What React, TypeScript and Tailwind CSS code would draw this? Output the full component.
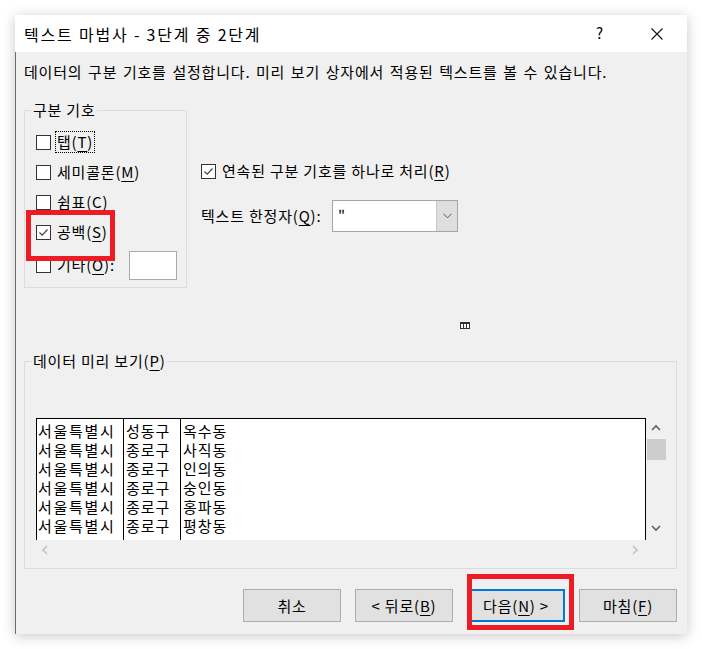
import React from "react";

const font = "font-['Noto_Sans_CJK_KR','Noto_Sans',sans-serif]";

function Mn({ children }: { children: string }) {
  return <span className="underline underline-offset-[3px] decoration-1">{children}</span>;
}

function CheckBox({ checked }: { checked?: boolean }) {
  return (
    <span className="flex h-[15px] w-[15px] shrink-0 items-center justify-center border border-[#333333] bg-white">
      {checked && (
        <svg width="13" height="13" viewBox="0 0 13 13">
          <polyline points="2.5,6.5 5.2,9.2 10.5,3.5" fill="none" stroke="#444444" strokeWidth="1.2" />
        </svg>
      )}
    </span>
  );
}

function Chevron({ dir, color }: { dir: "up" | "down" | "left" | "right"; color: string }) {
  const pts = {
    up: "1,6 5,2 9,6",
    down: "1,2 5,6 9,2",
    left: "6,1 2,5 6,9",
    right: "2,1 6,5 2,9",
  }[dir];
  const vertical = dir === "up" || dir === "down";
  return (
    <svg width={vertical ? 10 : 8} height={vertical ? 8 : 10} viewBox={vertical ? "0 0 10 8" : "0 0 8 10"}>
      <polyline points={pts} fill="none" stroke={color} strokeWidth="1.6" />
    </svg>
  );
}

const rows = [
  ["서울특별시", "성동구", "옥수동"],
  ["서울특별시", "종로구", "사직동"],
  ["서울특별시", "종로구", "인의동"],
  ["서울특별시", "종로구", "숭인동"],
  ["서울특별시", "종로구", "홍파동"],
  ["서울특별시", "종로구", "평창동"],
];

export default function App() {
  return (
    <div className={`relative h-[649px] w-[702px] bg-white pl-[15px] pt-[15px] text-[15px] tracking-[0.8px] text-black ${font}`}>
      <div className="w-[672px] shadow-[0_2px_12px_rgba(0,0,0,0.22)]">
        {/* title bar */}
        <div className="flex h-[37px] items-center bg-white pl-[9px]">
          <span className="text-[16px] leading-[20px] tracking-[1.8px]">텍스트 마법사 - 3단계 중 2단계</span>
          <div className="ml-auto flex pr-[7px]">
            <span className="mr-[11px] flex h-[37px] w-[46px] items-center justify-center">?</span>
            <span className="flex h-[37px] w-[46px] items-center justify-center">
              <svg width="12" height="12" viewBox="0 0 12 12">
                <path d="M0.5 0.5L11.5 11.5M11.5 0.5L0.5 11.5" stroke="#111111" strokeWidth="1.1" />
              </svg>
            </span>
          </div>
        </div>

        {/* body */}
        <div className="flex h-[582px] flex-col border-l border-[#6e6e6e] bg-[#f0f0f0] pl-[8px] pr-[10px]">
          <p className="mt-[10px] leading-[20px] [word-spacing:1.5px]">
            데이터의 구분 기호를 설정합니다. 미리 보기 상자에서 적용된 텍스트를 볼 수 있습니다.
          </p>

          <div className="mt-[28px] flex">
            {/* 구분 기호 */}
            <div className="h-[178px] w-[163px] border border-[#dcdcdc]">
              <div className="-mt-[11px] ml-[7px] w-fit bg-[#f0f0f0] px-[1px] leading-[20px]">구분 기호</div>
              <div className="mt-[7px] flex h-[30px] items-center pl-[11px]">
                <CheckBox />
                <span className="ml-[4px] border border-dotted border-black px-[1px] leading-[20px]">
                  탭(<Mn>T</Mn>)
                </span>
              </div>
              <div className="flex h-[30px] items-center gap-[6px] pl-[11px]">
                <CheckBox />
                <span className="leading-[20px]">세미콜론(<Mn>M</Mn>)</span>
              </div>
              <div className="flex h-[30px] items-center gap-[6px] pl-[11px]">
                <CheckBox />
                <span className="leading-[20px]">쉼표(<Mn>C</Mn>)</span>
              </div>
              <div className="flex h-[30px] items-center gap-[6px] pl-[11px]">
                <CheckBox checked />
                <span className="leading-[20px]">공백(<Mn>S</Mn>)</span>
              </div>
              <div className="mt-[3px] flex h-[30px] items-center gap-[6px] pl-[11px] pr-[9px]">
                <CheckBox />
                <span className="leading-[20px]">기타(<Mn>O</Mn>):</span>
                <span className="ml-auto h-[29px] w-[48px] border border-[#a9a9a9] bg-white" />
              </div>
            </div>

            {/* right column */}
            <div className="ml-[14px] pt-[51px]">
              <div className="flex h-[20px] items-center gap-[6px]">
                <CheckBox checked />
                <span className="leading-[20px]">연속된 구분 기호를 하나로 처리(<Mn>R</Mn>)</span>
              </div>
              <div className="mt-[19px] flex h-[32px] items-center">
                <span className="w-[131px] leading-[20px]">텍스트 한정자(<Mn>Q</Mn>):</span>
                <div className="flex h-[32px] w-[126px] border border-[#a6a6a6] bg-white">
                  <span className="flex-1 pl-[5px] leading-[28px]">"</span>
                  <span className="flex w-[21px] items-center justify-center border-l border-[#c8c8c8] bg-[#dedede]">
                    <svg width="9" height="6" viewBox="0 0 9 6">
                      <polyline points="0.5,0.8 4.5,4.8 8.5,0.8" fill="none" stroke="#555555" strokeWidth="1" />
                    </svg>
                  </span>
                </div>
              </div>
            </div>
          </div>

          {/* small column-break icon */}
          <div className="ml-[436px] mt-[34px] h-[7px] w-[10px]">
            <svg width="10" height="7" viewBox="0 0 10 7">
              <rect x="0.5" y="0.5" width="9" height="6" fill="white" stroke="#333333" />
              <rect x="0" y="0" width="10" height="2" fill="#333333" />
              <line x1="3.5" y1="2" x2="3.5" y2="7" stroke="#333333" />
              <line x1="6.5" y1="2" x2="6.5" y2="7" stroke="#333333" />
            </svg>
          </div>

          {/* 데이터 미리 보기 */}
          <div className="mt-[32px] h-[208px] w-[653px] border border-[#dcdcdc]">
            <div className="-mt-[11px] ml-[7px] w-fit bg-[#f0f0f0] px-[1px] leading-[20px]">
              데이터 미리 보기(<Mn>P</Mn>)
            </div>
            <div className="ml-[11px] mt-[47px] w-[630px]">
              <div className="flex h-[122px]">
                <div className="flex w-[610px] border-x border-t border-black bg-white text-[15px] leading-[19px]">
                  <div className="w-[87px] border-r border-black pl-[1px] pt-[2px] tracking-[1.7px]">
                    {rows.map((r, i) => (
                      <div key={i}>{r[0]}</div>
                    ))}
                  </div>
                  <div className="w-[57px] border-r border-black pl-[2px] pt-[2px] tracking-[1px]">
                    {rows.map((r, i) => (
                      <div key={i}>{r[1]}</div>
                    ))}
                  </div>
                  <div className="flex-1 pl-[2px] pt-[2px] tracking-[1px]">
                    {rows.map((r, i) => (
                      <div key={i}>{r[2]}</div>
                    ))}
                  </div>
                </div>
                <div className="flex w-[20px] flex-col">
                  <span className="flex h-[20px] items-center justify-center">
                    <Chevron dir="up" color="#606060" />
                  </span>
                  <span className="ml-[1px] mt-[1px] h-[21px] w-[19px] bg-[#cdcdcd]" />
                  <span className="flex-1" />
                  <span className="flex h-[24px] items-center justify-center">
                    <Chevron dir="down" color="#606060" />
                  </span>
                </div>
              </div>
              <div className="flex h-[20px] items-center justify-between pr-[22px]">
                <span className="flex w-[18px] justify-center">
                  <Chevron dir="left" color="#c2c2c2" />
                </span>
                <span className="flex w-[18px] justify-center">
                  <Chevron dir="right" color="#c2c2c2" />
                </span>
              </div>
            </div>
          </div>

          {/* buttons */}
          <div className="mt-[20px] flex justify-end gap-[14px]">
            <button className="h-[33px] w-[98px] border border-[#adadad] bg-[#e1e1e1] leading-[20px]">취소</button>
            <button className="h-[33px] w-[98px] border border-[#adadad] bg-[#e1e1e1] leading-[20px]">
              &lt; 뒤로(<Mn>B</Mn>)
            </button>
            <button className="h-[33px] w-[98px] border-2 border-[#0078d7] bg-[#e1e1e1] leading-[20px]">
              다음(<Mn>N</Mn>) &gt;
            </button>
            <button className="h-[33px] w-[98px] border border-[#adadad] bg-[#e1e1e1] leading-[20px]">
              마침(<Mn>F</Mn>)
            </button>
          </div>
        </div>
      </div>

      {/* red annotation boxes */}
      <div className="absolute left-[26px] top-[210px] h-[51px] w-[89px] border-[5px] border-[#ed1c24]" />
      <div className="absolute left-[467px] top-[574px] h-[56px] w-[107px] border-[5px] border-[#ed1c24]" />
    </div>
  );
}
